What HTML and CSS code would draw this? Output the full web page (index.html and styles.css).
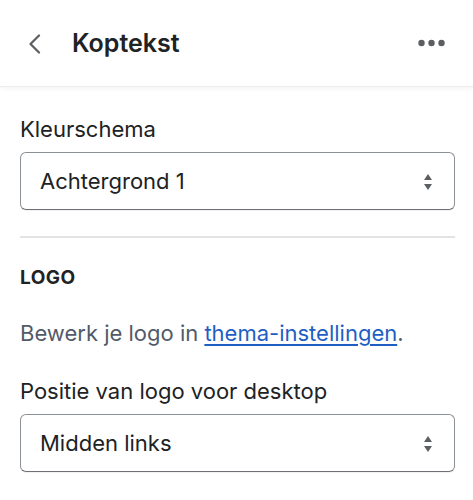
FILE: index.html
```html
<!DOCTYPE html>
<html lang="nl">
<head>
<meta charset="utf-8">
<title>Koptekst</title>
<link rel="stylesheet" href="styles.css">
</head>
<body>
<header class="topbar">
  <button class="icon-btn back" aria-label="Terug">
    <svg width="14" height="20" viewBox="0 0 14 20"><path d="M11 1.5 L2.5 10 L11 18.5" fill="none" stroke="#5c5f62" stroke-width="2.2" stroke-linecap="round" stroke-linejoin="round"/></svg>
  </button>
  <h1 class="title">Koptekst</h1>
  <button class="icon-btn more" aria-label="Meer">
    <svg width="28" height="8" viewBox="0 0 28 8"><circle cx="3.5" cy="4" r="3.2" fill="#5c5f62"/><circle cx="13.5" cy="4" r="3.2" fill="#5c5f62"/><circle cx="23.5" cy="4" r="3.2" fill="#5c5f62"/></svg>
  </button>
</header>
<main class="content">
  <label class="field-label">Kleurschema</label>
  <div class="select">
    <span class="select-value">Achtergrond 1</span>
    <svg class="updown" width="10" height="18" viewBox="0 0 10 18"><path d="M5 1 L9 7 H1 Z" fill="#5c5f62"/><path d="M5 17 L9 11 H1 Z" fill="#5c5f62"/></svg>
  </div>
  <hr class="divider">
  <h2 class="section-title">LOGO</h2>
  <p class="help">Bewerk je logo in <a href="#">thema-instellingen</a>.</p>
  <label class="field-label spaced">Positie van logo voor desktop</label>
  <div class="select">
    <span class="select-value">Midden links</span>
    <svg class="updown" width="10" height="18" viewBox="0 0 10 18"><path d="M5 1 L9 7 H1 Z" fill="#5c5f62"/><path d="M5 17 L9 11 H1 Z" fill="#5c5f62"/></svg>
  </div>
</main>
</body>
</html>
```
FILE: styles.css
```css
* { box-sizing: border-box; }
html, body { margin: 0; padding: 0; }
body {
  width: 473px;
  height: 500px;
  overflow: hidden;
  background: #ffffff;
  font-family: Inter, "Noto Sans", "Liberation Sans", sans-serif;
  color: #202223;
}
.topbar {
  height: 86px;
  display: flex;
  align-items: center;
  padding: 0 20px 0 28px;
  background: #fff;
  box-shadow: 0 1px 0 #ececec, 0 2px 5px rgba(0,0,0,0.06);
  position: relative;
}
.icon-btn {
  border: 0;
  background: none;
  padding: 0;
  display: flex;
  align-items: center;
  justify-content: center;
}
.back { width: 14px; height: 20px; margin-top: 1px; }
.title {
  margin: 0 0 0 30px;
  font-size: 25px;
  font-weight: 600;
  line-height: 30px;
  color: #202223;
  flex: 1;
}
.more { width: 28px; height: 8px; margin-right: 7px; }
.content {
  padding: 29px 18px 0 20px;
  display: flex;
  flex-direction: column;
}
.field-label {
  font-size: 22px;
  line-height: 28px;
  color: #202223;
}
.field-label.spaced { margin-top: 30px; }
.select {
  margin-top: 9px;
  height: 58px;
  border: 1px solid #8c9196;
  border-bottom-color: #6d7175;
  border-radius: 6px;
  display: flex;
  align-items: center;
  justify-content: space-between;
  padding: 0 21px 0 19px;
  box-shadow: 0 1px 0 rgba(0,0,0,0.05);
}
.select-value {
  font-size: 22px;
  line-height: 28px;
  color: #202223;
}
.updown { display: block; margin-top: 1px; }
.divider {
  margin: 26px 0 0;
  border: 0;
  height: 2px;
  background: #e1e3e5;
}
.section-title {
  margin: 28px 0 0;
  font-size: 19px;
  line-height: 24px;
  font-weight: 700;
  letter-spacing: 0.5px;
  color: #202223;
}
.help {
  margin: 29px 0 0;
  font-size: 22px;
  line-height: 28px;
  color: #525a68;
}
.help a {
  color: #1f5fc4;
  text-decoration: underline;
  text-underline-offset: 3px;
  text-decoration-thickness: 1.5px;
}
```
